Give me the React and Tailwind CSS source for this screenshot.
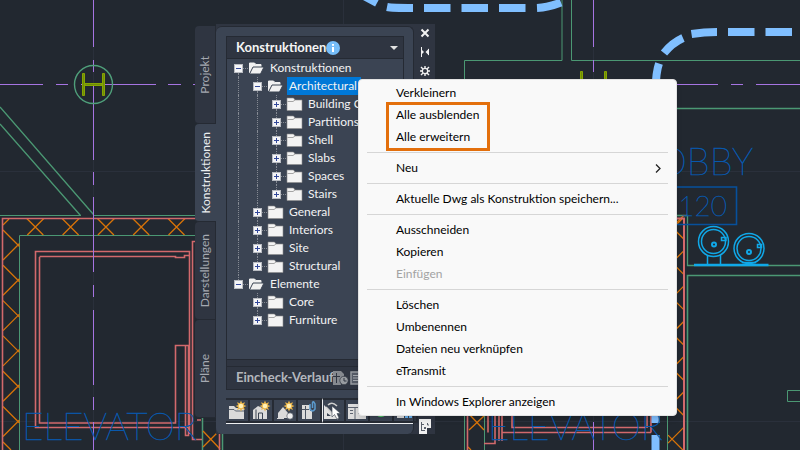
import React from "react";

const TABS = [
  { label: "Projekt" },
  { label: "Konstruktionen", active: true },
  { label: "Darstellungen" },
  { label: "Pläne" },
];

// guides: one flag per ancestor column; up / down: halves of the row's own line
const ROWS = [
  { label: "Konstruktionen", open: true, guides: [], down: true },
  { label: "Architectural", open: true, guides: [true], up: true, down: true, selected: true },
  { label: "Building Core", guides: [true, true], up: true, down: true },
  { label: "Partitions", guides: [true, true], up: true, down: true },
  { label: "Shell", guides: [true, true], up: true, down: true },
  { label: "Slabs", guides: [true, true], up: true, down: true },
  { label: "Spaces", guides: [true, true], up: true, down: true },
  { label: "Stairs", guides: [true, true], up: true },
  { label: "General", guides: [true], up: true, down: true },
  { label: "Interiors", guides: [true], up: true, down: true },
  { label: "Site", guides: [true], up: true, down: true },
  { label: "Structural", guides: [true], up: true },
  { label: "Elemente", open: true, guides: [], up: true },
  { label: "Core", guides: [false], up: true, down: true },
  { label: "Furniture", guides: [false], up: true },
];

const MENU = [
  [{ label: "Verkleinern" }, { label: "Alle ausblenden" }, { label: "Alle erweitern" }],
  [{ label: "Neu", submenu: true }],
  [{ label: "Aktuelle Dwg als Konstruktion speichern..." }],
  [{ label: "Ausschneiden" }, { label: "Kopieren" }, { label: "Einfügen", disabled: true }],
  [{ label: "Löschen" }, { label: "Umbenennen" }, { label: "Dateien neu verknüpfen" }, { label: "eTransmit" }],
  [{ label: "In Windows Explorer anzeigen" }],
];

const PITCH = 35.3;
const steps = (n) => Array.from({ length: n }, (_, i) => i);

function Drawing() {
  return (
    <svg className="absolute left-0 top-0" width="800" height="450" viewBox="0 0 800 450" fill="none" aria-hidden="true">
      <path d="M0 171.500H800M0 421.500H800M343.500 0V450M93.500 0V450M593.500 0V450" stroke="#2a303b" />

      <g stroke="#4b9873">
        <path d="M0 107L93.500 214.500M0 124L80.500 215.500" strokeWidth="1.300" />
        <path d="M0 215.500H81M94 215.500H200M19.500 450V235.500H200" />
        <path d="M202.500 416V450M222.500 434V450" strokeWidth="1.500" />
        <path d="M562 0V60.500H464.500V450M571.500 0V60.500H800M484.500 410V450M667.500 410V450" />
        <path d="M670 108.500H800M800 275.500H687.500V450" strokeWidth="1.600" />
        <path d="M670 215.500H687.500V265.500H800" strokeWidth="1.300" />
        <path d="M800 390.500H787.500V401.500H800" />
      </g>

      <g stroke="#d97408" strokeWidth="1.300">
        <path d="M9 219L3 225" />
        {steps(5).map((i) => (
          <path key={i} transform={`translate(${35.3 + i * PITCH} 227)`} d="M-8.500-8.500L8 8M8.500-8.500L-8 8" />
        ))}
        {steps(6).map((i) => (
          <path key={i} transform={`translate(18 ${245 + i * PITCH})`} d="M-15-15L1.500 1.500M-15 15L1.500-1.500" />
        ))}
        <path d="M3 442L11 450M203 431L220 449M203 447L219 431M469 414L484 430M469 430L484 416M468 447L471 450" />
        {steps(7).map((i) => (
          <path key={i} transform={`translate(672 ${227.3 + i * PITCH})`} d="M12-12L-4 4M12 12L-4-4" />
        ))}
        <path d="M677 224L682 219" />
      </g>

      <g stroke="#d2696c" strokeWidth="1.600">
        <path d="M200 218.500H2.500V450" />
        <path d="M189.500 427.500H35.500V251.500H189.500V434" />
        <path d="M39.500 257V423H175.500V345.500H189M39.500 256.500H175.500V257.500H184.500V255.500H189" />
        <path d="M185.500 346V435.500H188.500V346" />
        <path d="M197 241.500H192.500V439.500H202M197 420H201M219.500 434V450" />
        <path d="M467.500 410V450M488 410V432.500M495 410V443.500H484M499 410V441M502 410V441M502 432.500H651M512 410V427.500H646M647 410V428M651 410V432.500" />
        <path d="M670 218.500H684V450" strokeWidth="2" />
      </g>

      <g stroke="#a674e2">
        <path d="M93.500 0V47M93.500 60V72M93.500 86V160M93.500 172V185M93.500 197V272M93.500 285V297M93.500 310V385M93.500 397V410M93.500 422V450" />
        <path d="M0 84.500H43M56 84.500H68M81 84.500H156M168 84.500H181M193 84.500H200" />
        <path d="M593.500 0V47M593.500 60V72M593.500 422V450" />
        <path d="M670 84.500H718M731 84.500H743M756 84.500H800" />
      </g>

      <circle cx="93.500" cy="84.500" r="19" stroke="#4f9f7a" strokeWidth="1.400" />
      <g fill="#6f8a0a" stroke="#86a600">
        <path d="M82.500 73.500H84.500V95.500H82.500ZM102.500 73.500H104.500V95.500H102.500ZM85 83.500H102V85.500H85Z" />
        <path d="M580.500 71.500H582.500V94H580.500ZM604.500 71.500H606.500V94H604.500Z" />
      </g>

      <g stroke="#80bfff" strokeWidth="8">
        <path d="M364-4L377 3M387 7Q392 8 413 8M424 8H450.500M461.500 8H488M499 8H525.500M537 8Q548 7.500 561 2.500" />
        <path d="M792 32H765.500M754.500 32H728M717 32Q704 32 691.500 34M683 38Q672 43 664 53M659 63.500Q656 72 655.500 90M655.500 410V423M655.500 435V450" />
      </g>

      <g stroke="#10a8e8" strokeWidth="1.500">
        <circle cx="713.500" cy="241.500" r="15" />
        <circle cx="713.500" cy="241.500" r="12" />
        <circle cx="714" cy="244.500" r="2" strokeWidth="2" />
        <path d="M721.500 237.500H726V240.500H721.500ZM707.500 255V265M720.500 255V265" />
        <circle cx="749" cy="248.500" r="15" />
        <circle cx="749" cy="248.500" r="12" />
        <circle cx="749" cy="252" r="2" strokeWidth="2" />
        <path d="M757.500 244.500H761.500V247.500H757.500ZM742 262.500H756" />
        <path d="M694 265H768.500" strokeWidth="2.500" />
      </g>

      <path d="M670 187H736.500V224.500H670" stroke="#07509c" strokeWidth="1.600" />
      <g fill="#0958ac" stroke="#0958ac" strokeWidth="0.500" fontFamily="Lato, sans-serif" fontWeight="100" fontSize="37">
        <text x="22" y="440">ELEVATOR</text>
        <text x="488" y="440">ELEVATOR</text>
        <text x="753" y="175" textAnchor="end">LOBBY</text>
        <text x="727" y="216" textAnchor="end" fontSize="28">120</text>
      </g>
    </svg>
  );
}

function Folder({ open }) {
  return (
    <svg width="17" height="14" viewBox="0 0 17 14" className="shrink-0" aria-hidden="true">
      {open ? (
        <>
          <path d="M1.500 12V2H6.500L8 3.500H13V6" fill="#f1f1f1" stroke="#f1f1f1" />
          <path d="M1.500 13L5 6H16L12.500 13Z" fill="#f1f1f1" stroke="#3b4453" />
        </>
      ) : (
        <>
          <path d="M1 1H7.500L9 3H16V13.500H1Z" fill="#f3f3f3" stroke="#8b8b8b" strokeWidth="0.600" />
          <path d="M1.500 4.500H7L9 3" stroke="#a5a5a5" fill="none" />
        </>
      )}
    </svg>
  );
}

function GuideCell({ on }) {
  return (
    <span className="flex h-full w-[19px] shrink-0 justify-center">
      {on && <span className="h-full border-l border-dotted border-[#858a93]" />}
    </span>
  );
}

function TreeRow({ row }) {
  return (
    <li className="flex h-[18px] items-center" role="treeitem" aria-selected={!!row.selected}>
      {row.guides.map((on, i) => (
        <GuideCell key={i} on={on} />
      ))}
      <span className="flex h-full w-[19px] shrink-0 flex-col items-center">
        <span className={"w-px flex-1 " + (row.up ? "border-l border-dotted border-[#858a93]" : "")} />
        <span className="grid w-full grid-cols-[1fr_9px_1fr] items-center">
          <button
            type="button"
            aria-label={(row.open ? "Collapse " : "Expand ") + row.label}
            className="col-start-2 flex h-[9px] w-[9px] items-center justify-center border border-[#b9bcc2] bg-[#f4f5f7]"
          >
            <svg width="7" height="7" viewBox="0 0 7 7" className="shrink-0" aria-hidden="true">
              <path d={row.open ? "M1 3.500H6" : "M1 3.500H6M3.500 1V6"} stroke="#33489a" />
            </svg>
          </button>
          <span className="border-t border-dotted border-[#858a93]" />
        </span>
        <span className={"w-px flex-1 " + (row.down ? "border-l border-dotted border-[#858a93]" : "")} />
      </span>
      <Folder open={row.open} />
      <span
        className={
          "ml-[3px] flex h-[18px] items-center whitespace-nowrap pl-[2px] pr-1 text-[12px] leading-[18px] text-[#f3f3f3] " +
          (row.selected ? "bg-[#0078d7]" : "")
        }
      >
        {row.label}
      </span>
    </li>
  );
}

function Star() {
  return (
    <g>
      <path d="M15 0.500L16.200 3.300L19 2.200L17.800 5L20.500 6L17.800 7.200L19 10L16.200 8.800L15 11.500L13.800 8.800L11 10L12.200 7.200L9.500 6L12.200 5L11 2.200L13.800 3.300Z" fill="#e9b44a" />
      <circle cx="15" cy="6" r="2.300" fill="#fff0b5" />
    </g>
  );
}

const TOOLS = [
  {
    name: "Neue Kategorie",
    art: (
      <>
        <path d="M3 6H8L10 8H18V19H3Z" fill="#dadada" />
        <path d="M3 9.500H8L9.500 11H18" stroke="#3b4453" strokeWidth="0.800" fill="none" />
        <Star />
      </>
    ),
  },
  {
    name: "Neue Konstruktion",
    art: (
      <>
        <path d="M3 10L8 6L17 10V19H3Z" fill="#dadada" />
        <path d="M6 19V9.500M8.500 19V13H12.500V19" stroke="#3b4453" fill="none" />
        <Star />
      </>
    ),
  },
  {
    name: "Neues Element",
    art: (
      <>
        <path d="M4 18V13L9 7L14 13V18Z" fill="#dadada" />
        <path d="M3 18.500H10" stroke="#dadada" />
        <circle cx="16" cy="16" r="3.200" fill="#eeeeee" stroke="#3b4453" strokeWidth="0.600" />
        <Star />
      </>
    ),
  },
  {
    name: "XRef anhängen",
    art: (
      <>
        <path d="M4 5H14V19H4Z" fill="#dadada" />
        <path d="M7.500 6V12M4 9.500H11M7.500 12V19" stroke="#4b5462" fill="none" />
        <path d="M12 3V11H17V3Z" fill="#3b4453" />
        <path d="M12 4V9Q14.500 13 17 9V4Q15 0 14.500 3V8" stroke="#5b9bd0" strokeWidth="1.500" fill="none" />
      </>
    ),
  },
  {
    name: "Auswählen",
    hot: true,
    art: (
      <>
        <path d="M1 5L15 19H1ZM4 13V16H8Z" fill="#e2e2e2" fillRule="evenodd" />
        <path d="M5 5Q9 1 14 6M3 7L15 19" stroke="#cfcfcf" strokeWidth="1.500" fill="none" />
        <path d="M9 6V17L11.500 14.500L14 19L16 18L14 13.500H17.500Z" fill="#fff" stroke="#3b4453" strokeWidth="0.600" />
      </>
    ),
  },
  {
    name: "Inhalt",
    art: (
      <>
        <path d="M2 4H20V19H2Z" fill="#dcdcdc" />
        <path d="M2 7.500H20M9 8V19M4 10.500H7M4 13.500H7M12 10.500H18M12 13.500H18" stroke="#5d6470" />
      </>
    ),
  },
  {
    name: "Aktualisieren",
    art: <path d="M4 8A7 7 0 0 1 18 8V10A7 7 0 0 1 4 10Z" fill="#4fd06a" />,
  },
  {
    name: "Synchronisieren",
    art: (
      <>
        <path d="M3 11H8V18H3ZM6 7H10V18H6Z" fill="#dcdcdc" />
        <path d="M12.500 9V18M16.500 7V18" stroke="#6bb5f3" strokeWidth="3" />
      </>
    ),
  },
];

function Palette() {
  return (
    <section className="absolute left-[195px] top-6 flex" aria-label="Projektnavigator">
      <nav className="mt-[2px] flex w-[21px] flex-col self-start">
        {TABS.map((t) => (
          <button
            key={t.label}
            type="button"
            className={
              "flex h-[98px] items-center justify-center rounded-l-sm border-b border-[#252a33] text-[12px] leading-4 " +
              (t.active ? "bg-[#3b4453] text-[#eceef0]" : "border-r bg-[#2f3541] text-[#a5a9b1]")
            }
          >
            <span className="rotate-180 whitespace-nowrap [writing-mode:vertical-rl]">{t.label}</span>
          </button>
        ))}
      </nav>

      <div className="flex bg-[#2f3541]">
        <div className="mt-[2px] flex w-[198px] flex-col rounded-md border-r border-t border-[#252a33] bg-[#3b4453] pb-[10px] pl-[10px]">
          <div className="mt-[9px] flex w-[178px] flex-col border border-[#252a33]">
            <button type="button" className="flex h-[21px] items-center bg-[#2f3541] px-[9px] text-[13px] font-bold text-[#f4f4f4]">
              Konstruktionen
              <svg width="14" height="14" viewBox="0 0 14 14" role="img" aria-label="Info">
                <circle cx="7" cy="7" r="7" fill="#76bdf8" />
                <path d="M7 3V4.800M7 6V11" stroke="#fff" strokeWidth="2" />
              </svg>
              <svg width="8" height="4" viewBox="0 0 8 4" className="-mr-1 ml-auto" aria-hidden="true">
                <path d="M0 0H8L4 4Z" fill="#e2e2e2" />
              </svg>
            </button>
            <ul className="h-[301px] overflow-hidden border-t border-[#252a33] pl-[2px]" role="tree">
              {ROWS.map((r) => (
                <TreeRow key={r.label} row={r} />
              ))}
            </ul>
            <div className="h-[8px] border-y border-[#252a33] bg-[#2f3541]" />
            <div className="flex h-[22px] items-center bg-[#2f3541] pl-[9px] text-[13px] font-bold text-[#b4b7bd]">
              Eincheck-Verlauf
              <button type="button" aria-label="Verlauf" className="-ml-px">
                <svg width="16" height="14" viewBox="0 0 16 14" aria-hidden="true">
                  <path d="M0 0H8L11 3V6Q6 8 8 14H0Z" fill="#85898f" />
                  <path d="M3.500 2V12M0 5.500H7" stroke="#2f3541" />
                  <circle cx="11" cy="9.500" r="4.200" fill="#979ba0" stroke="#2f3541" strokeWidth="0.700" />
                  <path d="M11 7V10H13.500" stroke="#2f3541" fill="none" />
                </svg>
              </button>
              <button type="button" aria-label="Liste" className="ml-px">
                <svg width="14" height="14" viewBox="0 0 14 14" aria-hidden="true">
                  <path d="M1 1H13V13H1Z" fill="#555b66" stroke="#979ba0" strokeWidth="1.500" />
                  <path d="M3 4.500H11M3 7H11M3 9.500H11" stroke="#a5a9af" />
                </svg>
              </button>
            </div>
          </div>

          <div className="mt-2 flex w-[187px] border-b border-[#eef0f2]" role="toolbar">
            {TOOLS.map((t) => (
              <button
                key={t.name}
                type="button"
                aria-label={t.name}
                className={
                  "flex h-[25px] w-6 shrink-0 items-center justify-center overflow-hidden border-y-2 border-r-2 border-[#262b34] " +
                  (t.hot ? "border-l border-l-[#eef0f2]" : "border-l-0")
                }
              >
                <svg width="22" height="21" viewBox="0 0 22 21" className="shrink-0" aria-hidden="true">
                  {t.art}
                </svg>
              </button>
            ))}
          </div>
        </div>

        <div className="flex w-[21px] flex-col items-center pt-1">
          <div className="flex flex-col gap-[9px]">
            <button type="button" aria-label="Schließen">
              <svg width="10" height="10" viewBox="0 0 10 10" className="block" aria-hidden="true">
                <path d="M1.500 1.500L8.500 8.500M8.500 1.500L1.500 8.500" stroke="#f2f2f2" strokeWidth="2" />
              </svg>
            </button>
            <button type="button" aria-label="Automatisch ausblenden">
              <svg width="10" height="10" viewBox="0 0 10 10" className="block" aria-hidden="true">
                <path d="M1.500 0V10M8.500 2V8" stroke="#f2f2f2" />
                <path d="M2 3V7L4 5ZM9 1.500V8.500L5.500 5Z" fill="#f2f2f2" />
              </svg>
            </button>
            <button type="button" aria-label="Eigenschaften">
              <svg width="10" height="10" viewBox="0 0 10 10" className="block" aria-hidden="true">
                <circle cx="5" cy="5" r="2.700" fill="none" stroke="#f2f2f2" strokeWidth="1.300" />
                <path d="M5 0V2M5 8V10M0 5H2M8 5H10M1 1L3 3M9 1L7 3M1 9L3 7M9 9L7 7" stroke="#f2f2f2" strokeWidth="1.400" />
              </svg>
            </button>
          </div>
          <svg width="12" height="15" viewBox="0 0 12 15" className="mt-auto" role="img" aria-label="Projektnavigator">
            <path d="M0 0H12V9H8V15H0Z" fill="#f0f0f0" />
            <path d="M2.500 3V12M3 5.500H5M3 11.500H6M8.500 4V6H10" stroke="#5a606b" fill="none" />
            <path d="M5 8H7V10H5Z" fill="#5a606b" />
          </svg>
        </div>
      </div>
    </section>
  );
}

function ContextMenu() {
  return (
    <div
      className="absolute left-[358px] top-[79px] w-[319px] rounded-[4px] border border-[#e3e3e3] bg-[#f9f9f9] py-[2px] shadow-md"
      role="menu"
    >
      {MENU.map((group, g) => (
        <div key={g} role="group">
          {g > 0 && <hr className="mx-2 my-1 border-t border-[#d6d6d6]" />}
          {group.map((item) => (
            <button
              key={item.label}
              type="button"
              role="menuitem"
              disabled={item.disabled}
              className="flex h-[22px] w-full items-center justify-between pl-[37px] pr-[15px] text-left text-[12px] leading-[22px] text-black disabled:text-[#a3a3a3]"
            >
              {item.label}
              {item.submenu && (
                <svg width="6" height="9" viewBox="0 0 6 9" aria-hidden="true">
                  <path d="M1 0.500L5 4.500L1 8.500" stroke="#222222" strokeWidth="1.300" fill="none" />
                </svg>
              )}
            </button>
          ))}
        </div>
      ))}
      <div className="pointer-events-none absolute left-[27px] top-[22px] h-[49px] w-[104px] border-3 border-[#e36f0c]" />
    </div>
  );
}

export default function App() {
  return (
    <main className="relative min-h-screen w-full overflow-hidden bg-[#222830] font-['Lato','Noto_Sans',sans-serif]">
      <Drawing />
      <Palette />
      <ContextMenu />
    </main>
  );
}
